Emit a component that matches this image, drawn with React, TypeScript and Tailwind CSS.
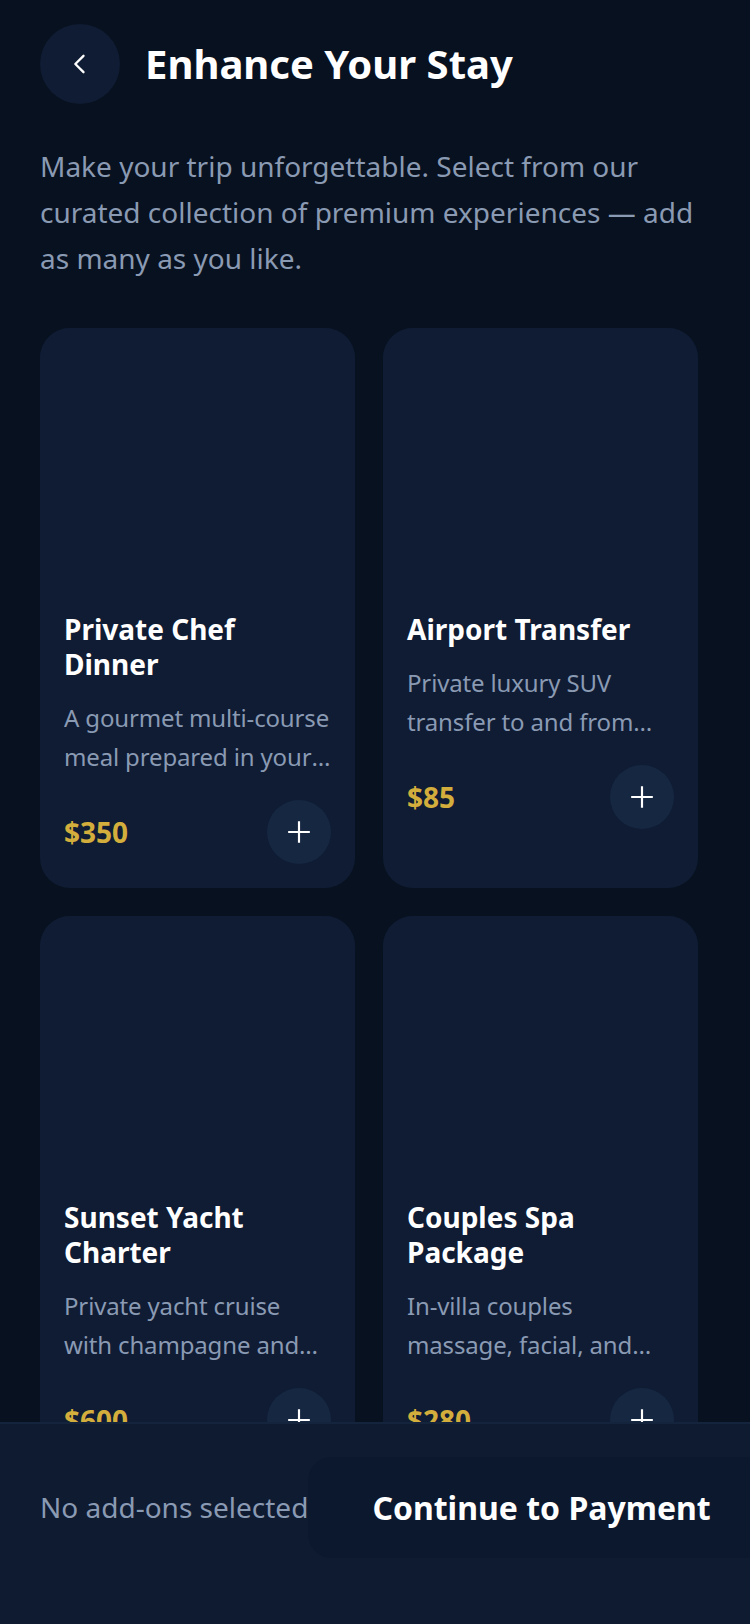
import React from 'react';

interface AddOn {
  id: string;
  title: string;
  description: string;
  price: number;
}

const addOns: AddOn[] = [
  {
    id: 'chef',
    title: 'Private Chef Dinner',
    description: 'A gourmet multi-course meal prepared in your villa by a renowned local chef.',
    price: 350,
  },
  {
    id: 'transfer',
    title: 'Airport Transfer',
    description: 'Private luxury SUV transfer to and from the airport with a personal driver.',
    price: 85,
  },
  {
    id: 'yacht',
    title: 'Sunset Yacht Charter',
    description: 'Private yacht cruise with champagne and canapés along the coastline.',
    price: 600,
  },
  {
    id: 'spa',
    title: 'Couples Spa Package',
    description: 'In-villa couples massage, facial, and aromatherapy session for two.',
    price: 280,
  },
];

const AddOnCard: React.FC<{ item: AddOn }> = ({ item }) => (
  <div className="flex flex-col rounded-[30px] bg-[#0f1c33] overflow-hidden">
    <div className="h-[260px] bg-[#0f1c33]" />
    <div className="flex flex-col p-6">
      <h3 className="text-[28px] leading-[35px] font-bold text-white">{item.title}</h3>
      <p className="mt-4 text-[24px] leading-[39px] tracking-[-0.15px] text-[#8a9ab3] line-clamp-2">{item.description}</p>
      <div className="mt-6 flex items-center justify-between">
        <span className="text-[28px] font-bold text-[#d4ae3c]">${item.price}</span>
        <button className="w-16 h-16 rounded-full bg-[#162741] flex items-center justify-center">
          <svg width="26" height="26" viewBox="0 0 24 24" fill="none" stroke="white" strokeWidth="2" strokeLinecap="butt">
            <path d="M12 2v20M2 12h20" />
          </svg>
        </button>
      </div>
    </div>
  </div>
);

export default function App() {
  return (
    <div className="min-h-[1624px] bg-[#08111f] overflow-hidden" style={{ fontFamily: '"Noto Sans", "Open Sans", sans-serif' }}>
      <div className="px-10 pt-6 pb-[260px]">
        <div className="flex items-center gap-[25px]">
          <button className="w-20 h-20 rounded-full bg-[#0f1c33] flex items-center justify-center shrink-0">
            <svg width="28" height="28" viewBox="0 0 24 24" fill="none" stroke="white" strokeWidth="2" strokeLinecap="round" strokeLinejoin="round">
              <path d="M15 5l-7 7 7 7" />
            </svg>
          </button>
          <h1 className="text-[40px] font-bold text-white leading-tight">Enhance Your Stay</h1>
        </div>

        <p className="mt-[39px] text-[28px] leading-[46px] text-[#8a9ab3]">
          Make your trip unforgettable. Select from our curated collection of premium experiences — add as many as you like.
        </p>

        <div className="mt-[47px] w-[658px] grid grid-cols-2 gap-7">
          {addOns.map(a => (
            <AddOnCard key={a.id} item={a} />
          ))}
        </div>
      </div>

      <div className="fixed left-0 right-0 bottom-0 h-[202px] bg-[#0f1b31] border-t-2 border-[#15243d] overflow-hidden">
        <div className="flex items-start pl-10 pt-[33px]">
          <span className="shrink-0 whitespace-nowrap text-[28px] leading-[101px] text-[#8a9ab3]">No add-ons selected</span>
          <button className="shrink-0 whitespace-nowrap h-[101px] px-16 rounded-[24px] bg-[#0c182e] text-[32px] font-bold text-white">
            Continue to Payment
          </button>
        </div>
      </div>
    </div>
  );
}
